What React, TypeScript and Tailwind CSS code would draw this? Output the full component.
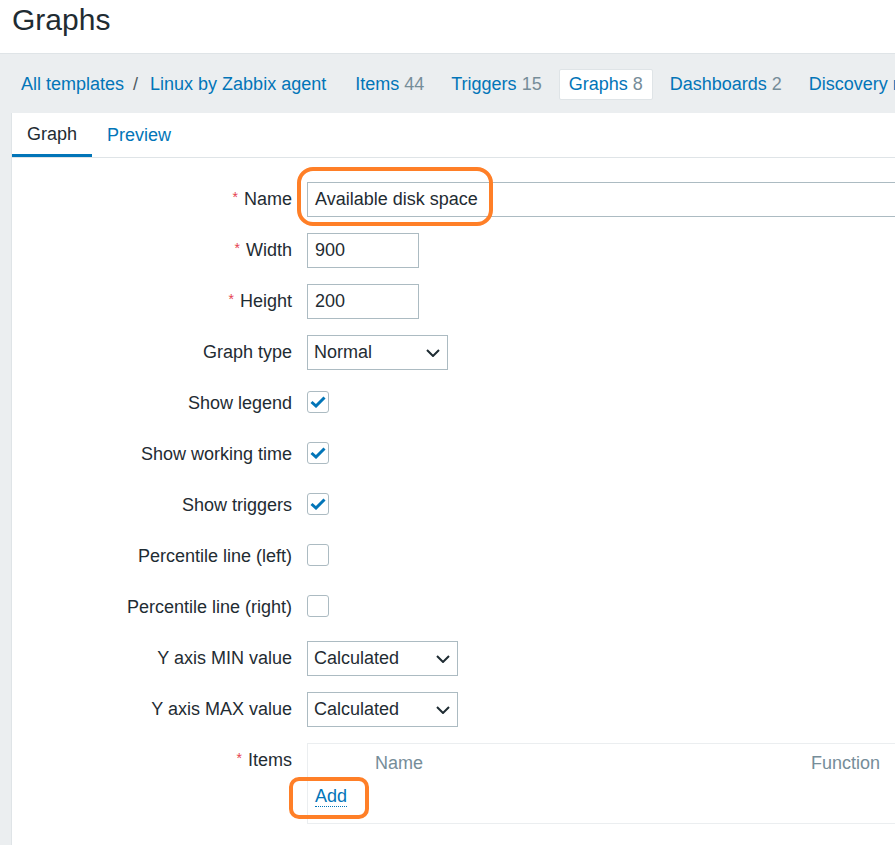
import React from 'react';

const blue = 'text-[#0275b8]';

function Chevron() {
  return (
    <svg width="14" height="8" viewBox="0 0 14 8" fill="none" className="shrink-0">
      <path d="M1 1l6 6 6-6" stroke="#1f2c33" strokeWidth="2" />
    </svg>
  );
}

function Checkbox({ checked }: { checked?: boolean }) {
  return (
    <div className="w-[22px] h-[22px] border border-[#acbbc2] rounded-[3px] bg-white flex items-center justify-center mb-[3px]">
      {checked && (
        <svg width="16" height="12" viewBox="0 0 16 12" fill="none">
          <path d="M1.5 6l4.5 4L14.5 1.5" stroke="#0275b8" strokeWidth="3" />
        </svg>
      )}
    </div>
  );
}

function Select({ value, width }: { value: string; width: string }) {
  return (
    <div className={`${width} h-[35px] border border-[#acbbc2] bg-white flex items-center justify-between pl-[6px] pr-[7px]`}>
      <span>{value}</span>
      <Chevron />
    </div>
  );
}

function Row({ label, required, top, children }: { label: string; required?: boolean; top?: boolean; children: React.ReactNode }) {
  return (
    <div className={`flex ${top ? 'items-start' : 'items-center'} min-h-[35px]`}>
      <div className="w-[280px] h-[35px] flex items-center justify-end shrink-0">
        {required && <span className="text-[#e54251] text-[14px] mr-[6px] -mt-[4px]">*</span>}
        <span>{label}</span>
      </div>
      <div className="ml-[15px] flex items-center">{children}</div>
    </div>
  );
}

export default function App() {
  return (
    <div className="relative w-[895px] h-[845px] overflow-hidden bg-[#ebeef0] font-['Liberation_Sans',Arial,sans-serif] text-[18px] text-[#1f2c33]">
      {/* Header */}
      <div className="h-[54px] bg-white border-b border-[#dfe4e7] pl-[12px] pt-[3px]">
        <h1 className="text-[30px] leading-[34px]">Graphs</h1>
      </div>

      {/* Breadcrumb nav */}
      <div className="h-[59px] flex items-center pl-[21px] pt-[1px] whitespace-nowrap">
        <span className={blue}>All templates</span>
        <span className="ml-[9px] mr-[12px] text-[#4f5a60]">/</span>
        <span className={blue}>Linux by Zabbix agent</span>
        <div className="flex items-center ml-[19px] gap-[7px]">
          <span className="px-[10px] py-[4px]">
            <span className={blue}>Items</span> <span className="text-[#768d99]">44</span>
          </span>
          <span className="px-[10px] py-[4px]">
            <span className={blue}>Triggers</span> <span className="text-[#768d99]">15</span>
          </span>
          <span className="px-[9px] h-[31px] flex items-center bg-white border border-[#dfe4e7] rounded-[2px]">
            <span className={blue}>Graphs</span>&nbsp;<span className="text-[#768d99]">8</span>
          </span>
          <span className="px-[10px] py-[4px]">
            <span className={blue}>Dashboards</span> <span className="text-[#768d99]">2</span>
          </span>
          <span className="px-[10px] py-[4px]">
            <span className={blue}>Discovery rules</span> <span className="text-[#768d99]">3</span>
          </span>
        </div>
      </div>

      {/* Main panel */}
      <div className="ml-[11px] bg-white border-l border-[#dfe4e7] h-[732px]">
        <div className="h-[45px] flex border-b border-[#dfe4e7]">
          <div className="px-[15px] pt-[1px] flex items-center border-b-[3px] border-[#0275b8]">Graph</div>
          <div className={`px-[15px] pt-[1px] flex items-center ${blue}`}>Preview</div>
        </div>

        <div className="pt-[24px] flex flex-col gap-[16px]">
          <Row label="Name" required>
            <div className="w-[700px] h-[35px] border border-[#acbbc2] flex items-center pl-[7px]">Available disk space</div>
          </Row>
          <Row label="Width" required>
            <div className="w-[112px] h-[35px] border border-[#acbbc2] flex items-center pl-[7px]">900</div>
          </Row>
          <Row label="Height" required>
            <div className="w-[112px] h-[35px] border border-[#acbbc2] flex items-center pl-[7px]">200</div>
          </Row>
          <Row label="Graph type">
            <Select value="Normal" width="w-[141px]" />
          </Row>
          <Row label="Show legend">
            <Checkbox checked />
          </Row>
          <Row label="Show working time">
            <Checkbox checked />
          </Row>
          <Row label="Show triggers">
            <Checkbox checked />
          </Row>
          <Row label="Percentile line (left)">
            <Checkbox />
          </Row>
          <Row label="Percentile line (right)">
            <Checkbox />
          </Row>
          <Row label="Y axis MIN value">
            <Select value="Calculated" width="w-[151px]" />
          </Row>
          <Row label="Y axis MAX value">
            <Select value="Calculated" width="w-[151px]" />
          </Row>
          <Row label="Items" required top>
            <div className="w-[700px] h-[81px] border border-[#ebeef0]">
              <div className="h-[39px] flex items-center text-[#768d99]">
                <span className="ml-[67px]">Name</span>
                <span className="ml-[388px]">Function</span>
              </div>
              <div className="pl-[7px]">
                <span className={`${blue} leading-[22px] border-b border-dotted border-[#0275b8]`}>Add</span>
              </div>
            </div>
          </Row>
        </div>
      </div>

      {/* Annotations */}
      <div className="absolute left-[297px] top-[167px] w-[196px] h-[59px] border-[4px] border-[#ff7f27] rounded-[16px] pointer-events-none" />
      <div className="absolute left-[289px] top-[777px] w-[80px] h-[42px] border-[4px] border-[#ff7f27] rounded-[10px] pointer-events-none" />
    </div>
  );
}
